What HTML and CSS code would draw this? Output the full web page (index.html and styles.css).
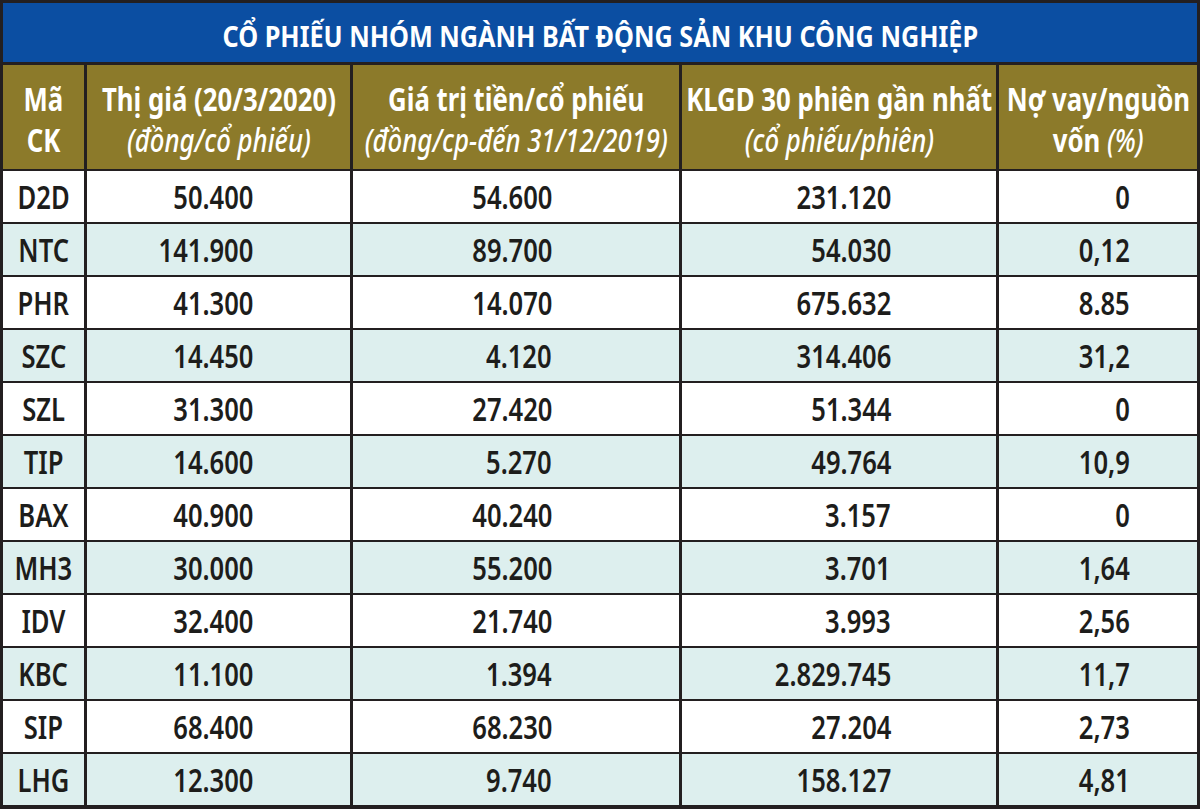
FILE: index.html
```html
<!DOCTYPE html>
<html lang="vi">
<head>
<meta charset="utf-8">
<title>Cổ phiếu nhóm ngành bất động sản khu công nghiệp</title>
<link rel="stylesheet" href="styles.css">
</head>
<body>
<div class="table">
  <div class="title"><span class="t">CỔ PHIẾU NHÓM NGÀNH BẤT ĐỘNG SẢN KHU CÔNG NGHIỆP</span></div>

  <div class="th"><span class="t b">Mã</span><span class="t b">CK</span></div>
  <div class="th"><span class="t b">Thị giá (20/3/2020)</span><span class="t i">(đồng/cổ phiếu)</span></div>
  <div class="th"><span class="t b">Giá trị tiền/cổ phiếu</span><span class="t i">(đồng/cp-đến 31/12/2019)</span></div>
  <div class="th"><span class="t b">KLGD 30 phiên gần nhất</span><span class="t i">(cổ phiếu/phiên)</span></div>
  <div class="th"><span class="t b">Nợ vay/nguồn</span><span class="t"><span class="b">vốn</span> <span class="i">(%)</span></span></div>

  <div class="td c1"><span class="t">D2D</span></div><div class="td c2"><span class="t">50.400</span></div><div class="td c3"><span class="t">54.600</span></div><div class="td c4"><span class="t">231.120</span></div><div class="td c5"><span class="t">0</span></div>
  <div class="td c1 alt"><span class="t">NTC</span></div><div class="td c2 alt"><span class="t">141.900</span></div><div class="td c3 alt"><span class="t">89.700</span></div><div class="td c4 alt"><span class="t">54.030</span></div><div class="td c5 alt"><span class="t">0,12</span></div>
  <div class="td c1"><span class="t">PHR</span></div><div class="td c2"><span class="t">41.300</span></div><div class="td c3"><span class="t">14.070</span></div><div class="td c4"><span class="t">675.632</span></div><div class="td c5"><span class="t">8.85</span></div>
  <div class="td c1 alt"><span class="t">SZC</span></div><div class="td c2 alt"><span class="t">14.450</span></div><div class="td c3 alt"><span class="t">4.120</span></div><div class="td c4 alt"><span class="t">314.406</span></div><div class="td c5 alt"><span class="t">31,2</span></div>
  <div class="td c1"><span class="t">SZL</span></div><div class="td c2"><span class="t">31.300</span></div><div class="td c3"><span class="t">27.420</span></div><div class="td c4"><span class="t">51.344</span></div><div class="td c5"><span class="t">0</span></div>
  <div class="td c1 alt"><span class="t">TIP</span></div><div class="td c2 alt"><span class="t">14.600</span></div><div class="td c3 alt"><span class="t">5.270</span></div><div class="td c4 alt"><span class="t">49.764</span></div><div class="td c5 alt"><span class="t">10,9</span></div>
  <div class="td c1"><span class="t">BAX</span></div><div class="td c2"><span class="t">40.900</span></div><div class="td c3"><span class="t">40.240</span></div><div class="td c4"><span class="t">3.157</span></div><div class="td c5"><span class="t">0</span></div>
  <div class="td c1 alt"><span class="t">MH3</span></div><div class="td c2 alt"><span class="t">30.000</span></div><div class="td c3 alt"><span class="t">55.200</span></div><div class="td c4 alt"><span class="t">3.701</span></div><div class="td c5 alt"><span class="t">1,64</span></div>
  <div class="td c1"><span class="t">IDV</span></div><div class="td c2"><span class="t">32.400</span></div><div class="td c3"><span class="t">21.740</span></div><div class="td c4"><span class="t">3.993</span></div><div class="td c5"><span class="t">2,56</span></div>
  <div class="td c1 alt"><span class="t">KBC</span></div><div class="td c2 alt"><span class="t">11.100</span></div><div class="td c3 alt"><span class="t">1.394</span></div><div class="td c4 alt"><span class="t">2.829.745</span></div><div class="td c5 alt"><span class="t">11,7</span></div>
  <div class="td c1"><span class="t">SIP</span></div><div class="td c2"><span class="t">68.400</span></div><div class="td c3"><span class="t">68.230</span></div><div class="td c4"><span class="t">27.204</span></div><div class="td c5"><span class="t">2,73</span></div>
  <div class="td c1 alt"><span class="t">LHG</span></div><div class="td c2 alt"><span class="t">12.300</span></div><div class="td c3 alt"><span class="t">9.740</span></div><div class="td c4 alt"><span class="t">158.127</span></div><div class="td c5 alt"><span class="t">4,81</span></div>
</div>
</body>
</html>
```

FILE: styles.css
```css
* { box-sizing: border-box; }
html, body { margin: 0; padding: 0; background: #ffffff; }
body {
  font-family: "Noto Sans", "Open Sans", sans-serif;
}
.table {
  width: 1200px;
  height: 809px;
  display: grid;
  grid-template-columns: 81px 263px 326px 314px 198px;
  grid-template-rows: 60px 104px repeat(12, 51px);
  column-gap: 3px;
  row-gap: 2px;
  padding: 3px;
  background: #231f20;
}
.t {
  display: inline-block;
  white-space: nowrap;
  transform: scaleX(0.78);
}
.title {
  grid-column: 1 / -1;
  background: #0b4ea2;
  color: #ffffff;
  font-weight: bold;
  font-size: 29px;
  display: flex;
  align-items: center;
  justify-content: center;
  padding-top: 6px;
  margin-bottom: 1px;
}
.title .t { transform: scaleX(0.87); }
.th {
  background: #8c7a2a;
  color: #ffffff;
  display: flex;
  flex-direction: column;
  align-items: center;
  justify-content: center;
  font-size: 33px;
  line-height: 41px;
  padding-top: 4px;
}
.th .b { font-weight: bold; }
.th .i { font-style: italic; font-weight: 500; }
.td {
  background: #ffffff;
  color: #1d1d1b;
  font-size: 33px;
  font-weight: 600;
  display: flex;
  align-items: center;
  justify-content: flex-end;
}
.td .t { transform: scaleX(0.775); transform-origin: right center; }
.td.c1 .t { transform-origin: center center; }
.td.alt { background: #ddefee; }
.c1 { justify-content: center; }
.c2 { padding-right: 97px; }
.c3 { padding-right: 127px; }
.c4 { padding-right: 105px; }
.c5 { padding-right: 67px; }
```
